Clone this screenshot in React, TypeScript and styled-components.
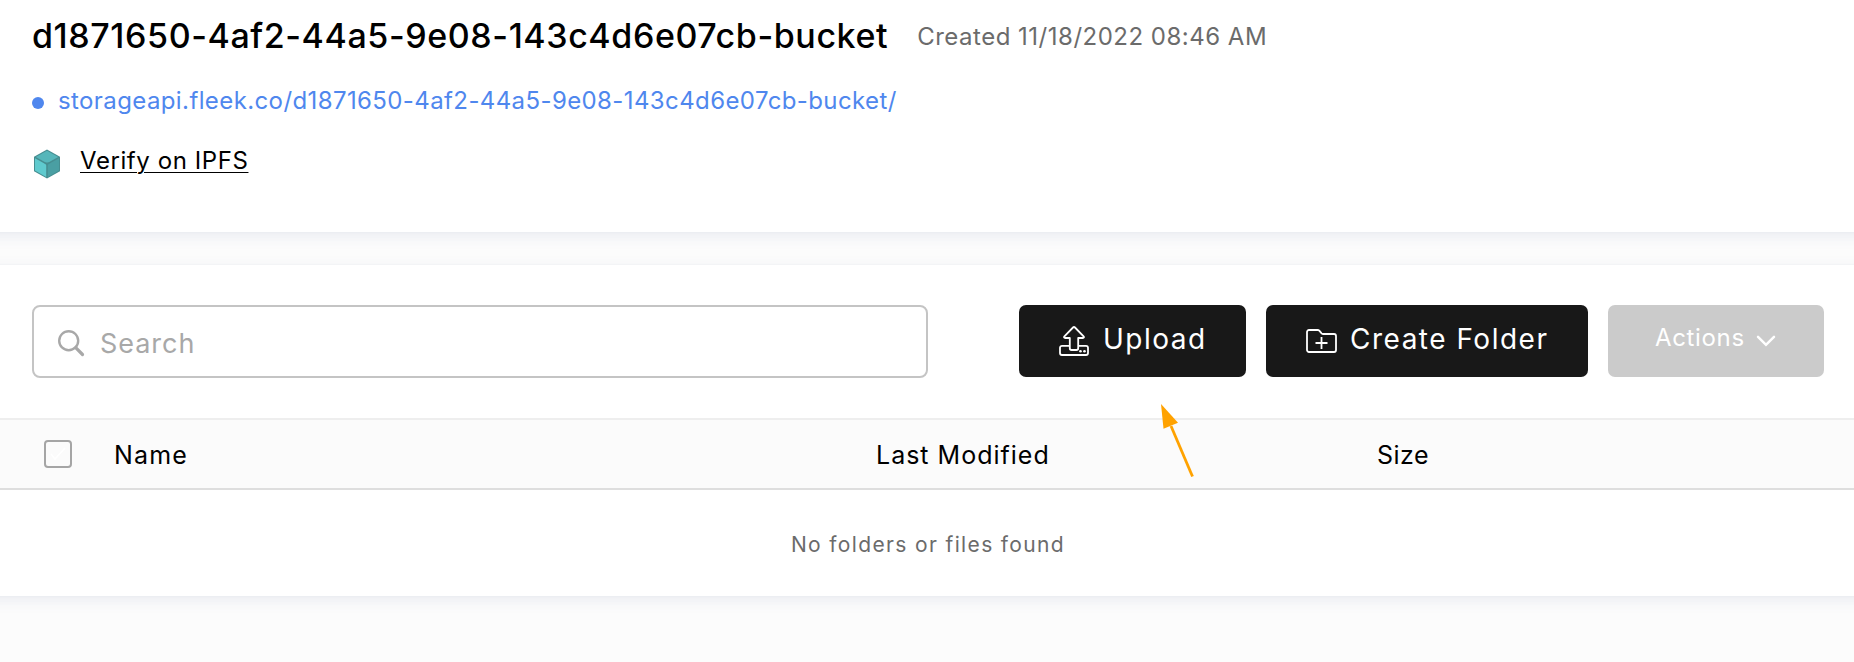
import React from "react";
import styled, { createGlobalStyle } from "styled-components";

const GlobalStyle = createGlobalStyle`
  * { box-sizing: border-box; }
  body {
    margin: 0;
    background: #fcfcfc;
    color: #000;
    font-family: Inter, "Liberation Sans", sans-serif;
    font-weight: 400;
    overflow: hidden;
  }
`;

const Page = styled.div`
  position: relative;
  display: flex;
  flex-direction: column;
  gap: 33px;
  min-height: 662px;
  overflow: hidden;
`;

/* Cards bleed past both page edges so their shadow stays even across the width. */
const Card = styled.section`
  margin: 0 -24px;
  padding: 0 24px;
  background: #fff;
  box-shadow: 0 4px 14px rgba(70, 85, 150, 0.1), 0 0 3px rgba(0, 0, 0, 0.03);
`;

const BucketHeader = styled(Card)`
  display: flex;
  flex-direction: column;
  height: 232px;
  padding: 16px 56px 0;
`;

const TitleRow = styled.div`
  display: flex;
  align-items: center;
  gap: 29px;
  height: 40px;
`;

const Title = styled.h1`
  margin: 0;
  font-size: 34px;
  font-weight: 500;
  line-height: 40px;
  letter-spacing: 0.59px;
  white-space: nowrap;
`;

const Created = styled.span`
  padding-top: 1px;
  color: #6b6b6b;
  font-size: 24px;
  line-height: 30px;
  letter-spacing: 0.5px;
  white-space: nowrap;
`;

const UrlRow = styled.div`
  display: flex;
  align-items: center;
  gap: 14px;
  height: 30px;
  margin-top: 30px;
`;

const Dot = styled.i`
  width: 12px;
  height: 12px;
  margin-top: 4px;
  border-radius: 50%;
  background: #4f87ee;
`;

const UrlLink = styled.a`
  color: #4f87ee;
  font-size: 24px;
  line-height: 30px;
  letter-spacing: 0.395px;
  white-space: nowrap;
`;

const VerifyRow = styled.div`
  display: flex;
  align-items: flex-start;
  gap: 19px;
  margin-top: 30px;
  padding-left: 1px;

  svg { margin-top: 3px; }
`;

const VerifyLink = styled.a`
  font-size: 24px;
  line-height: 30px;
  letter-spacing: 0.58px;
  text-decoration: underline;
  text-decoration-thickness: 1px;
  text-underline-offset: 3px;
`;

const Toolbar = styled.div`
  display: flex;
  justify-content: space-between;
  height: 153px;
  padding: 40px 30px 0 32px;
`;

const SearchBox = styled.label`
  display: flex;
  align-items: center;
  gap: 15px;
  width: 896px;
  height: 73px;
  padding: 4px 24px 0;
  border: 2px solid #c4c4c4;
  border-radius: 8px;
`;

const SearchInput = styled.input`
  flex: 1;
  padding: 0;
  border: 0;
  outline: 0;
  background: transparent;
  font: 27px Inter, "Liberation Sans", sans-serif;
  letter-spacing: 0.95px;

  &::placeholder { color: #a8a8a8; opacity: 1; }
`;

const Buttons = styled.div`
  display: flex;
  gap: 20px;
`;

const Button = styled.button<{ $width: number; $gap: number; $spacing: number }>`
  display: flex;
  align-items: center;
  gap: ${(p) => p.$gap}px;
  width: ${(p) => p.$width}px;
  height: 72px;
  padding: 0 0 0 40px;
  border: 0;
  border-radius: 7px;
  background: #181818;
  color: #fff;
  font: 28px Inter, "Liberation Sans", sans-serif;
  letter-spacing: ${(p) => p.$spacing}px;
  white-space: nowrap;

  span { padding-bottom: 4px; }
`;

const ActionsButton = styled(Button)`
  padding-left: 47px;
  background: #cbcbcb;
  font-size: 24px;

  span { padding-bottom: 7px; }
`;

const TableHead = styled.div`
  display: grid;
  grid-template-columns: 70px 762px 501px 1fr;
  align-items: center;
  height: 72px;
  padding-left: 44px;
  border-top: 2px solid #eeeeee;
  border-bottom: 2px solid #dedede;
  background: #fbfbfb;
`;

const Checkbox = styled.span`
  display: grid;
  place-items: center;
  width: 28px;
  height: 28px;
  border: 2px solid #a5a5a5;
  border-radius: 4px;
`;

const HeadCell = styled.span<{ $spacing: number }>`
  padding-top: 1px;
  font-size: 25px;
  line-height: 30px;
  letter-spacing: ${(p) => p.$spacing}px;
`;

const EmptyRow = styled.div`
  display: flex;
  align-items: center;
  justify-content: center;
  height: 106px;
  padding: 2px 0 0 2px;
  color: #6b6b6b;
  font-size: 21px;
  letter-spacing: 1.36px;
`;

const Pointer = styled.svg`
  position: absolute;
  left: 1156px;
  top: 400px;
`;

const CubeIcon = () => (
  <svg width="28" height="30" viewBox="0 0 28 30">
    <path d="M14 .5 27 7.8v14.5L14 29.5 1 22.3V7.8Z" fill="#468e91" />
    <path d="M14 1.8 25.2 8 14 14.2 2.8 8Z" fill="#56b6ba" />
    <path d="M2 9.2 13.2 15.5v12.4L2 21.6Z" fill="#5fcace" />
    <path d="M26 9.2 14.8 15.5v12.4L26 21.6Z" fill="#4a9fa3" />
    <path d="M10.8 13.5h6.4L14 16.5Z" fill="#468e91" />
  </svg>
);

const SearchIcon = () => (
  <svg width="27" height="27" viewBox="0 0 27 27" fill="none" stroke="#a8a8a8">
    <circle cx="10.7" cy="10.7" r="9.5" strokeWidth="2.4" />
    <path d="m17.7 17.7 6.8 6.8" strokeWidth="3.2" strokeLinecap="round" />
  </svg>
);

const UploadIcon = () => (
  <svg width="30" height="30" viewBox="0 0 30 30" fill="none" stroke="#fff" strokeWidth="1.8" strokeLinejoin="round">
    <path d="M10.5 19.8H3a2 2 0 0 0-2 2V27a2 2 0 0 0 2 2h24a2 2 0 0 0 2-2v-5.2a2 2 0 0 0-2-2h-7.5" />
    <path d="M10.8 12H6.2c-1.2 0-1.5-1-.8-1.7L14 1.5q1-1 2 0l8.6 8.8c.7.7.4 1.7-.8 1.7h-4.6v10.3q0 1.7-1.7 1.7h-5q-1.7 0-1.7-1.7Z" />
    <circle cx="21.5" cy="25.3" r="1.3" fill="#fff" stroke="none" />
    <circle cx="25.5" cy="25.3" r="1.3" fill="#fff" stroke="none" />
  </svg>
);

const FolderIcon = () => (
  <svg width="31" height="24" viewBox="0 0 31 24" fill="none" stroke="#fff" strokeWidth="1.8" strokeLinejoin="round">
    <path d="M1 3a2 2 0 0 1 2-2h8.6q1 0 1.7.7L15.6 4.3q.7.7 1.7.7H28a2 2 0 0 1 2 2v14a2 2 0 0 1-2 2H3a2 2 0 0 1-2-2Z" />
    <path d="M15.5 8v12M9.5 14h12" />
  </svg>
);

const ChevronIcon = () => (
  <svg width="20" height="12" viewBox="0 0 20 12" fill="none" stroke="#fff" strokeWidth="2.5" strokeLinecap="round">
    <path d="m2 1.8 8 8 8-8" />
  </svg>
);

const CheckIcon = () => (
  <svg width="16" height="14" viewBox="0 0 16 14" fill="none" stroke="#fff" strokeWidth="1.5">
    <path d="m1 7 4 5L15 1" />
  </svg>
);

export default function App() {
  return (
    <>
      <GlobalStyle />
      <Page>
        <BucketHeader>
          <TitleRow>
            <Title>d1871650-4af2-44a5-9e08-143c4d6e07cb-bucket</Title>
            <Created>Created 11/18/2022 08:46 AM</Created>
          </TitleRow>
          <UrlRow>
            <Dot />
            <UrlLink>storageapi.fleek.co/d1871650-4af2-44a5-9e08-143c4d6e07cb-bucket/</UrlLink>
          </UrlRow>
          <VerifyRow>
            <CubeIcon />
            <VerifyLink>Verify on IPFS</VerifyLink>
          </VerifyRow>
        </BucketHeader>

        <Card>
          <Toolbar>
            <SearchBox>
              <SearchIcon />
              <SearchInput placeholder="Search" />
            </SearchBox>
            <Buttons>
              <Button $width={227} $gap={14} $spacing={1.5}>
                <UploadIcon />
                <span>Upload</span>
              </Button>
              <Button $width={322} $gap={13} $spacing={1.5}>
                <FolderIcon />
                <span>Create Folder</span>
              </Button>
              <ActionsButton $width={216} $gap={11} $spacing={0.65} disabled>
                <span>Actions</span>
                <ChevronIcon />
              </ActionsButton>
            </Buttons>
          </Toolbar>
          <TableHead>
            <Checkbox>
              <CheckIcon />
            </Checkbox>
            <HeadCell $spacing={1.2}>Name</HeadCell>
            <HeadCell $spacing={1}>Last Modified</HeadCell>
            <HeadCell $spacing={0.5}>Size</HeadCell>
          </TableHead>
          <EmptyRow>No folders or files found</EmptyRow>
        </Card>

        <Pointer width="44" height="82" viewBox="0 0 44 82">
          <path d="m15 26 21.5 50.5" stroke="#ffa200" strokeWidth="2.8" />
          <path d="M5 4 22 22.7 7.5 28.8Z" fill="#ffa200" />
        </Pointer>
      </Page>
    </>
  );
}
